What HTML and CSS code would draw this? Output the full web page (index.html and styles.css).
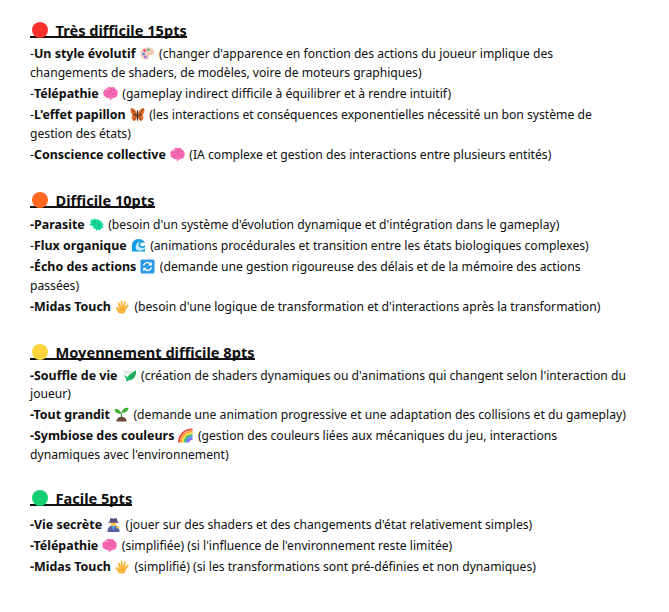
FILE: index.html
```html
<!DOCTYPE html>
<html lang="fr">
<head>
<meta charset="utf-8">
<title>Difficulté</title>
<link rel="stylesheet" href="styles.css">
</head>
<body>
<svg class="defs" width="0" height="0">
<symbol id="brain" viewBox="0 0 16 16"><path d="M5 1.500C6.500.5 8 1 8.800 1.500 10.500.6 12.500 1.200 13 3 15 3.800 16 6 15.600 8 16 10.200 14.500 12.200 12.500 12.300 11.300 13.500 10 13.700 9 13.200 9 14.200 8.500 15.500 7.200 15L7.500 13C6 13.400 4.300 13 3.300 12 1.300 11.500 0 9.500.4 7.800 0 5.800 1.300 3.500 3.300 3.300 3.700 2.500 4.300 1.900 5 1.500Z" fill="#f66bb4"/><path d="M3.500 6c1.200-1 2.400-.8 3.500.2M9.500 4c1 1 2.300 1 3.500.4M3 9.500c1.500.5 3 0 4-1.300M9.500 7.500c1 1.500 2.800 1.700 4.500 1M8.200 2.500v5" fill="none" stroke="#e0489b" stroke-width=".8"/><path d="M3.500 4.800C4.500 3.600 6 3.300 7 3.500" fill="none" stroke="#ffb0d8" stroke-width=".9"/></symbol>
<symbol id="palm" viewBox="0 0 16 16"><path d="M4.500 15.500C3 14 2 11.500 .9 10 .3 9 1.500 8 2.400 8.800L4 10.500 3.200 4.500C3 3.300 4.600 3 4.900 4.200L6 8 6.200 2.300C6.300 1 8 1 8 2.300L8.200 7.800 9.900 3C10.300 1.800 11.800 2.300 11.500 3.500L10.300 8.600 13 6.200C14 5.400 15.200 6.500 14.400 7.500L11.500 11.800C11 13.500 10.500 14.800 9.800 15.500Z" fill="#f9b73e"/><path d="M5 12c1.500-1.500 3.500-1.500 5 0" fill="none" stroke="#e8962a" stroke-width=".8"/></symbol>
</svg>
<main class="doc">
<section class="level level-top">
<h2 class="title"><svg class="dot" viewBox="0 0 16 16"><circle cx="8" cy="8" r="8" fill="#f8312f"/></svg><span>Très difficile 15pts</span></h2>
<p class="item">-<b>Un style évolutif</b><svg class="emoji" viewBox="0 0 16 16"><path d="M8 1.500C3.500 1.500 .5 4.500.5 8.200s3 6.300 7 6.300c2 0 2.300-1.500 1.800-2.700-.5-1.300.5-2.300 2-2.300 2 0 4-.6 4-2.800 0-3-3-5.200-7.300-5.200Z" fill="#f6c9b6"/><circle cx="5" cy="5" r="1.500" fill="#e0457b"/><circle cx="9" cy="4" r="1.400" fill="#4fb477"/><circle cx="3.800" cy="8.500" r="1.400" fill="#3d8bf0"/><circle cx="5.800" cy="11.600" r="1.400" fill="#9b5de5"/></svg>(changer d'apparence en fonction des actions du joueur implique des changements de shaders, de modèles, voire de moteurs graphiques)</p>
<p class="item">-<b>Télépathie</b><svg class="emoji"><use href="#brain"/></svg>(gameplay indirect difficile à équilibrer et à rendre intuitif)</p>
<p class="item">-<b>L'effet papillon</b><svg class="emoji" viewBox="0 0 16 16"><path d="M7.500 7.500C6.500 3 3.500.8 1 1.200 0 4 .8 7 2.800 8.300 1 10 1.500 13.500 3.800 14.800c2.300.5 3.200-2.300 3.700-5.300ZM8.500 7.500C9.500 3 12.500.8 15 1.200c1 2.800.2 5.800-1.800 7.100 1.800 1.700 1.300 5.200-1 6.500-2.300.5-3.200-2.300-3.700-5.300Z" fill="#e8722f"/><path d="M8 3.500v11" stroke="#3a2a2a" stroke-width="1.300"/><path d="M1.500 1.700l4.500 6-3 .8 4 .2-3 5.500M14.500 1.700l-4.500 6 3 .8-4 .2 3 5.500" fill="none" stroke="#54322a" stroke-width=".8"/></svg>(les interactions et conséquences exponentielles nécessité un bon système de gestion des états)</p>
<p class="item">-<b>Conscience collective</b><svg class="emoji"><use href="#brain"/></svg>(IA complexe et gestion des interactions entre plusieurs entités)</p>
</section>
<section class="level">
<h2 class="title"><svg class="dot" viewBox="0 0 16 16"><circle cx="8" cy="8" r="8" fill="#ff6723"/></svg><span>Difficile 10pts</span></h2>
<p class="item"><b>-Parasite</b><svg class="emoji" viewBox="0 0 16 16"><path d="M2 2l2.500 1L6 1.500l1.500 1.500L10 2l1 2h2.200l.3 2 2 1.500-1.200 2 1 2.300-2.300.2-.8 2.200-2.300-.8-2 1.300-1-2.200-2.200-.3-.2-2.300L.5 8.500l1.500-2-1-2.500 2 .3Z" fill="#16d79b"/><circle cx="6" cy="6" r="1" fill="#0aa878"/><circle cx="10.500" cy="9" r="1.100" fill="#0aa878"/></svg>(besoin d'un système d'évolution dynamique et d'intégration dans le gameplay)</p>
<p class="item">-<b>Flux organique</b><svg class="emoji" viewBox="0 0 16 16"><path d="M1 14.500V8C1 4 4 1 8 1c3.500 0 6 1.800 7 4.500-2-1-4-1-5 .3-1 1.300 0 3 2 3 1.400 0 2.500-.4 3-1v6.700Z" fill="#149be8"/><path d="M5 10c0-3.500 2-6 5-6.300C8 5 7.500 7 8.500 8.800 10 11 13 11.200 15 9.500v2.300C11 14.500 5 14 5 10Z" fill="#c4ecfc"/></svg>(animations procédurales et transition entre les états biologiques complexes)</p>
<p class="item"><b>-Écho des actions</b><svg class="emoji" viewBox="0 0 16 16"><rect x=".5" y=".5" width="15" height="15" rx="2" fill="#2b9ae8"/><path d="M3.800 7a4.300 4.300 0 0 1 7.400-1.800M12.200 9a4.300 4.300 0 0 1-7.400 1.800" fill="none" stroke="#fff" stroke-width="1.500"/><path d="M12.500 3v3.800H8.700zM3.500 13V9.200h3.800z" fill="#fff"/></svg>(demande une gestion rigoureuse des délais et de la mémoire des actions passées)</p>
<p class="item"><b>-Midas Touch</b><svg class="emoji"><use href="#palm"/></svg>(besoin d'une logique de transformation et d'interactions après la transformation)</p>
</section>
<section class="level level-tight">
<h2 class="title"><svg class="dot" viewBox="0 0 16 16"><circle cx="8" cy="8" r="8" fill="#fcd53f"/></svg><span>Moyennement difficile 8pts</span></h2>
<p class="item"><b>-Souffle de vie</b><svg class="emoji" viewBox="0 0 16 16"><path d="M1 2c2.500 2.500 6 .5 10-1-.5 3.500-3 6-6.500 5.500C2.500 6 1.500 4.500 1 2Z" fill="#e4e7e5"/><path d="M15 2.500c.5 6-2.500 10.500-7 10.500-1.500 0-2.500.7-3.500 2.300C4 10.500 7.500 6 15 2.500Z" fill="#22ad5f"/><path d="M2 7c1 4.500 4 6 6.500 5" fill="#2fc06d"/></svg>(création de shaders dynamiques ou d'animations qui changent selon l'interaction du joueur)</p>
<p class="item"><b>-Tout grandit</b><svg class="emoji" viewBox="0 0 16 16"><path d="M7.400 11.500V6h1.200v5.500Z" fill="#3c9a3e"/><path d="M8 7C6.500 3 3.500 1.800.5 2.300 1 6 4.500 8 8 7ZM8 6c.8-3.300 3.500-5.500 7.500-5C15 5 11.500 7 8 6Z" fill="#45b035"/><path d="M2.500 15.500c.5-3.500 2.800-5 5.500-5s5 1.500 5.500 5Z" fill="#6d4a36"/></svg>(demande une animation progressive et une adaptation des collisions et du gameplay)</p>
<p class="item"><b>-Symbiose des couleurs</b><svg class="emoji" viewBox="0 0 16 16"><g fill="none" stroke-width="1.900"><path d="M1 15.500C1 7 7 1.500 15.500 1.500" stroke="#f0483e"/><path d="M3 15.500C3 9 8 3.500 15.500 3.500" stroke="#f99a2a"/><path d="M5 15.500c0-5.500 4-10 10.500-10" stroke="#fcd53f"/><path d="M7 15.500c0-4.500 3-8 8.500-8" stroke="#3fb950"/><path d="M9 15.500c0-3.500 2-6 6.500-6" stroke="#3d8bf0"/><path d="M11 15.500c0-2.500 1.500-4 4.500-4" stroke="#8a5cf0"/></g></svg>(gestion des couleurs liées aux mécaniques du jeu, interactions dynamiques avec l'environnement)</p>
</section>
<section class="level level-easy">
<h2 class="title"><svg class="dot" viewBox="0 0 16 16"><circle cx="8" cy="8" r="8" fill="#15cf72"/></svg><span>Facile 5pts</span></h2>
<p class="item"><b>-Vie secrète</b><svg class="emoji" viewBox="0 0 16 16"><path d="M1.500 16c0-5 2.500-7 6.500-7s6.500 2 6.500 7Z" fill="#5a5f9e"/><circle cx="8" cy="7" r="3.200" fill="#f8c25c"/><path d="M2.500 5h11v1.200h-11ZM4.500 1c1.500.8 5.500.8 7 0l.7 4.500H3.800Z" fill="#574a7a"/><path d="M6 9.500l2 5 2-5Z" fill="#49b0ea"/><circle cx="12.500" cy="11" r="1.500" fill="#f8c25c"/></svg>(jouer sur des shaders et des changements d'état relativement simples)</p>
<p class="item"><b>-Télépathie</b><svg class="emoji"><use href="#brain"/></svg>(simplifiée) (si l'influence de l'environnement reste limitée)</p>
<p class="item"><b>-Midas Touch</b><svg class="emoji"><use href="#palm"/></svg>(simplifié) (si les transformations sont pré-définies et non dynamiques)</p>
</section>
</main>
</body>
</html>
```
FILE: styles.css
```css
html, body { margin: 0; background: #fff; }
body { font-family: "Noto Sans", sans-serif; color: #0e0e0e; }
.defs { position: absolute; }
.doc { width: 600px; padding: 23px 0 0 30px; }
.level { margin-bottom: 29.5px; }
.level-tight { margin-bottom: 26.5px; }
.title {
  display: flex;
  align-items: flex-start;
  width: fit-content;
  height: 13px;
  margin: 0 0 6.5px;
  border-bottom: 2px solid #111;
  font-size: 14.6px;
  line-height: 14px;
  font-weight: 700;
}
.level-top .title { margin-bottom: 5.5px; }
.level-easy .title { margin-bottom: 9.5px; }
.dot { flex: none; width: 16px; height: 16px; margin: -1px 7.5px -4px 2px; }
.item { margin: 0 0 2px; font-size: 12.15px; line-height: 19px; }
.level-tight .item { margin-bottom: 2.5px; line-height: 18.5px; }
.item b { font-size: 12.45px; font-weight: 700; }
.emoji { width: 15px; height: 15px; vertical-align: -3px; margin: 0 4.5px 0 4px; }
```
